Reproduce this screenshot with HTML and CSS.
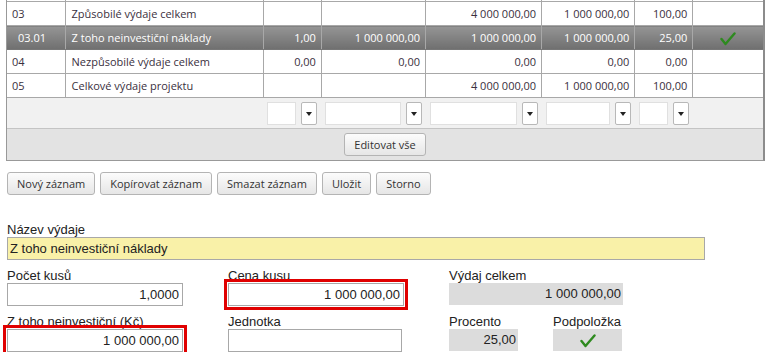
FILE: index.html
```html
<!DOCTYPE html>
<html lang="cs">
<head>
    <meta charset="UTF-8">
    <title>Rozpočet projektu</title>
    <link rel="stylesheet" href="styles.css">
</head>
<body>
    <div class="grid-wrap">
        <table class="grid">
            <colgroup>
                <col style="width:58px"><col style="width:198px"><col style="width:58px"><col style="width:104px">
                <col style="width:116px"><col style="width:93px"><col style="width:58px"><col style="width:70px">
            </colgroup>
            <tr class="row">
                <td></td><td></td><td></td><td></td><td></td><td></td><td></td><td></td>
            </tr>
            <tr class="row">
                <td>03</td><td>Způsobilé výdaje celkem</td><td></td><td></td><td class="num">4 000 000,00</td><td class="num">1 000 000,00</td><td class="num">100,00</td><td></td>
            </tr>
            <tr class="row selected">
                <td class="sub">03.01</td><td>Z toho neinvestiční náklady</td><td class="num">1,00</td><td class="num">1 000 000,00</td><td class="num">1 000 000,00</td><td class="num">1 000 000,00</td><td class="num">25,00</td>
                <td class="center">
                    <svg width="16" height="14" viewBox="0 0 16 14"><path d="M1.5 7 L5.5 12 L14.5 1.5" fill="none" stroke="#2e8a1f" stroke-width="2.4" stroke-linecap="round" stroke-linejoin="round"/></svg>
                </td>
            </tr>
            <tr class="row">
                <td>04</td><td>Nezpůsobilé výdaje celkem</td><td class="num">0,00</td><td class="num">0,00</td><td class="num">0,00</td><td class="num">0,00</td><td class="num">0,00</td><td></td>
            </tr>
            <tr class="row">
                <td>05</td><td>Celkové výdaje projektu</td><td></td><td></td><td class="num">4 000 000,00</td><td class="num">1 000 000,00</td><td class="num">100,00</td><td></td>
            </tr>
            <tr class="filter">
                <td></td><td></td>
                <td><div class="flt"><span class="flt-box"></span><span class="flt-btn"></span></div></td>
                <td><div class="flt"><span class="flt-box"></span><span class="flt-btn"></span></div></td>
                <td><div class="flt"><span class="flt-box"></span><span class="flt-btn"></span></div></td>
                <td><div class="flt"><span class="flt-box"></span><span class="flt-btn"></span></div></td>
                <td><div class="flt"><span class="flt-box"></span><span class="flt-btn"></span></div></td>
                <td></td>
            </tr>
            <tr class="foot">
                <td colspan="8"><button class="btn">Editovat vše</button></td>
            </tr>
        </table>
    </div>

    <div class="toolbar">
        <button class="btn">Nový záznam</button>
        <button class="btn">Kopírovat záznam</button>
        <button class="btn">Smazat záznam</button>
        <button class="btn">Uložit</button>
        <button class="btn">Storno</button>
    </div>

    <form class="detail">
        <div class="field name">
            <label>Název výdaje</label>
            <div class="input yellow">Z toho neinvestiční náklady</div>
        </div>
        <div class="form-grid">
            <div class="field">
                <label>Počet kusů</label>
                <div class="input">1,0000</div>
            </div>
            <div class="field">
                <label>Cena kusu</label>
                <div class="input error">1 000 000,00</div>
            </div>
            <div class="field wide">
                <label>Výdaj celkem</label>
                <div class="value">1 000 000,00</div>
            </div>
            <div class="field">
                <label>Z toho neinvestiční (Kč)</label>
                <div class="input error">1 000 000,00</div>
            </div>
            <div class="field">
                <label>Jednotka</label>
                <div class="input short"></div>
            </div>
            <div class="field">
                <label>Procento</label>
                <div class="value small">25,00</div>
            </div>
            <div class="field">
                <label>Podpoložka</label>
                <div class="value small center">
                    <svg width="16" height="14" viewBox="0 0 16 14"><path d="M1.5 7 L5.5 12 L14.5 1.5" fill="none" stroke="#2e8a1f" stroke-width="2.4" stroke-linecap="round" stroke-linejoin="round"/></svg>
                </div>
            </div>
        </div>
    </form>
</body>
</html>
```

FILE: styles.css
```css
body {
    margin: 0;
    background: #fff;
    font-family: "Liberation Sans", Arial, sans-serif;
    color: #222;
}

.grid-wrap {
    margin: -22px 0 0 6px;
    width: 756px;
    border-left: 1px solid #999;
    border-right: 2px solid #8c8c8c;
    border-bottom: 1px solid #999;
}

.grid {
    width: 100%;
    border-collapse: collapse;
    table-layout: fixed;
    font-family: "Open Sans", sans-serif;
    font-size: 11px;
    color: #3a3040;
}

.grid .row td {
    height: 23px;
    padding: 0 5px;
    border-right: 1px solid #a8a8a8;
    border-bottom: 1px solid #a8a8a8;
    white-space: nowrap;
    overflow: hidden;
}

.grid .row td:last-child {
    border-right: none;
}

.grid .row td:nth-child(2) {
    padding-left: 6px;
}

.grid td.num {
    text-align: right;
}

.grid td.center {
    text-align: center;
}

.grid td.center svg {
    vertical-align: middle;
}

.grid .selected td {
    background: linear-gradient(#959595, #6f6f6f);
    color: #fff;
    border-bottom-color: #777;
}

.grid .selected td.sub {
    padding-left: 11px;
}

.grid .row:nth-child(6) td {
    border-bottom: 2px solid #8c8c8c;
}

.grid .filter td {
    background: #f1f1f1;
    height: 30px;
    padding: 0;
    border-bottom: 1px solid #c4c4c4;
}

.flt {
    display: flex;
    align-items: center;
    justify-content: space-between;
    padding: 0 4px;
}

.flt-box {
    flex: 1;
    height: 21px;
    background: #fff;
    border: 1px solid #e0e0e0;
    margin-right: 5px;
}

.flt-btn {
    width: 14px;
    height: 21px;
    background: #fff;
    border: 1px solid #b8b8b8;
    border-radius: 2px;
    position: relative;
}

.flt-btn::after {
    content: "";
    position: absolute;
    left: 4px;
    top: 9px;
    border-left: 3px solid transparent;
    border-right: 3px solid transparent;
    border-top: 4px solid #222;
}

.grid .foot td {
    background: #e3e3e3;
    height: 31px;
    padding: 0;
    text-align: center;
}

.btn {
    font-family: "Open Sans", sans-serif;
    font-size: 11px;
    color: #333;
    height: 23px;
    padding: 0 9px;
    background: linear-gradient(#fcfcfc, #e6e6e6);
    border: 1px solid #b4b4b4;
    border-radius: 3px;
}

.toolbar {
    display: flex;
    gap: 5px;
    margin: 11px 0 0 7px;
}

.detail {
    margin: 27px 0 0 7px;
    font-size: 13px;
}

.field label {
    display: block;
    height: 15px;
    line-height: 15px;
    color: #222;
}

.input {
    box-sizing: border-box;
    height: 23px;
    line-height: 21px;
    border: 1px solid #a8a8a8;
    background: #fff;
    padding: 0 3px;
    text-align: right;
    width: 176px;
}

.input.yellow {
    width: 698px;
    background: #f9f1a8;
    text-align: left;
    padding-left: 2px;
}

.input.error {
    outline: 3px solid #e00000;
    outline-offset: 1px;
}

.input.short {
    width: 174px;
}

.form-grid {
    display: grid;
    grid-template-columns: 221px 221px 104px 70px;
    row-gap: 8px;
    margin-top: 8px;
}

.field.wide {
    grid-column: span 2;
}

.value {
    box-sizing: border-box;
    height: 22px;
    line-height: 22px;
    background: #dcdcdc;
    text-align: right;
    padding: 0 2px;
    width: 174px;
}

.value.small {
    width: 69px;
}

.value.center {
    text-align: center;
}

.value svg {
    vertical-align: middle;
}
```
